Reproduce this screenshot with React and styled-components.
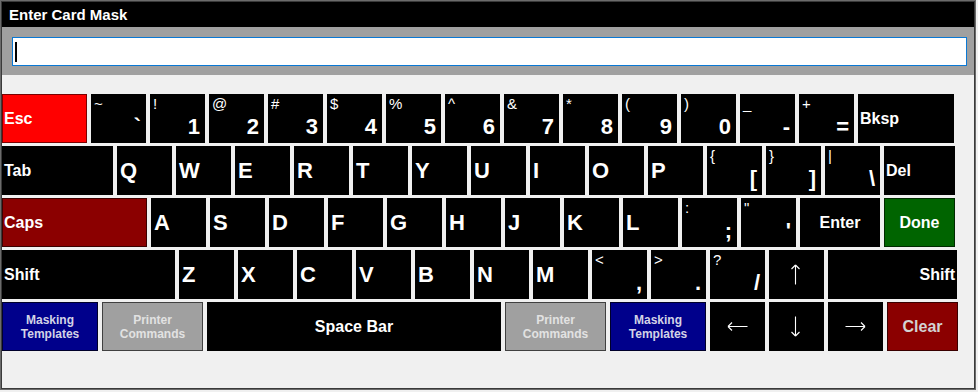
import React from "react";
import styled, { createGlobalStyle } from "styled-components";

const Global = createGlobalStyle`
  html, body { margin: 0; padding: 0; background: #f0f0f0; }
  body { font-family: "Liberation Sans", Arial, sans-serif; }
  * { box-sizing: border-box; }
`;

const Frame = styled.div`
  width: 976px;
  height: 390px;
  border: 1px solid #6b6b6b;
  padding: 1px;
  background: #3a3a3a;
  display: flex;
  flex-direction: column;
`;

const TitleBar = styled.div`
  height: 25px;
  flex: none;
  background: #000;
  color: #fff;
  font-weight: bold;
  font-size: 15px;
  display: flex;
  align-items: center;
  padding-left: 7px;
`;

const InputBand = styled.div`
  height: 48px;
  flex: none;
  background: #a0a0a0;
  padding: 10px 7px 9px 10px;
`;

const TextField = styled.div`
  width: 955px;
  height: 29px;
  background: #fff;
  border: 1px solid #0a78d4;
  display: flex;
  align-items: center;
  padding-left: 2px;
`;

const Caret = styled.span`
  display: block;
  width: 2px;
  height: 20px;
  background: #000;
`;

const KeyboardArea = styled.div`
  flex: 1;
  background: #f0f0f0;
  padding-top: 19px;
  display: flex;
  flex-direction: column;
  gap: 3px;
`;

const Row = styled.div`
  display: flex;
  gap: 4px;
`;

const KeyBase = styled.div`
  width: ${(p) => p.$w}px;
  height: 49px;
  flex: none;
  background: ${(p) => p.$bg || "#000"};
  border: 1px solid ${(p) => p.$bd || p.$bg || "#000"};
  color: ${(p) => p.$fg || "#fff"};
`;

const LabelKey = styled(KeyBase)`
  display: flex;
  align-items: center;
  justify-content: ${(p) =>
    p.$align === "right" ? "flex-end" : p.$align === "center" ? "center" : "flex-start"};
  padding: 0 1px;
  font-weight: bold;
  font-size: 16px;
  text-align: center;
`;

const LetterKey = styled(KeyBase)`
  display: flex;
  align-items: center;
  padding-left: 2px;
  font-weight: bold;
  font-size: 22px;
`;

const DualKey = styled(KeyBase)`
  display: flex;
  flex-direction: column;
  justify-content: space-between;
  padding: 0 4px 2px 2px;
`;

const Shifted = styled.span`
  align-self: flex-start;
  font-size: 15px;
  font-weight: normal;
  line-height: normal;
`;

const Main = styled.span`
  align-self: flex-end;
  font-size: 22px;
  font-weight: bold;
  line-height: normal;
`;

const SmallLabelKey = styled(KeyBase)`
  display: flex;
  align-items: center;
  justify-content: center;
  text-align: center;
  font-weight: bold;
  font-size: 12px;
  line-height: 14px;
`;

const ArrowKey = styled(KeyBase)`
  display: flex;
  align-items: center;
  justify-content: center;
  padding-right: ${(p) => (p.$vertical ? 3 : 1)}px;
`;

const ArrowSvg = styled.svg`
  display: block;
  transform: rotate(${(p) => p.$rot}deg);
`;

function ArrowIcon({ dir }) {
  const rot = { left: 0, up: 90, right: 180, down: 270 }[dir];
  return (
    <ArrowSvg $rot={rot} width="21" height="21" viewBox="0 0 21 21" fill="none">
      <path
        d="M1 10.5H20.5M1 10.5L5 6.5M1 10.5L5 14.5"
        stroke="#fff"
        strokeWidth="1.1"
      />
    </ArrowSvg>
  );
}

const RED = { $bg: "#ff0000", $bd: "#7a0000" };
const DARKRED = { $bg: "#8b0000", $bd: "#3a0000" };
const GREEN = { $bg: "#006400", $bd: "#002a00" };
const NAVY = { $bg: "#00008b", $bd: "#00002a", $fg: "#d3d3e6" };
const GRAY = { $bg: "#a0a0a0", $bd: "#404040", $fg: "#e2e2e2" };

const L = (label, w, extra = {}) => ({ kind: "label", label, w, ...extra });
const C = (ch) => ({ kind: "letter", label: ch, w: 55 });
const D = (s, m) => ({ kind: "dual", s, m, w: 55 });
const A = (dir) => ({ kind: "arrow", dir, w: 55 });
const S = (label, w, extra) => ({ kind: "small", label, w, ...extra });

const rows = [
  [
    L("Esc", 85, RED),
    D("~", "`"), D("!", "1"), D("@", "2"), D("#", "3"), D("$", "4"), D("%", "5"),
    D("^", "6"), D("&", "7"), D("*", "8"), D("(", "9"), D(")", "0"), D("_", "-"),
    D("+", "="),
    L("Bksp", 96),
  ],
  [
    L("Tab", 111),
    ..."QWERTYUIOP".split("").map(C),
    D("{", "["), D("}", "]"), D("|", "\\"),
    L("Del", 71),
  ],
  [
    L("Caps", 145, DARKRED),
    ..."ASDFGHJKL".split("").map(C),
    D(":", ";"), D('"', "'"),
    L("Enter", 80, { $align: "center" }),
    L("Done", 71, { ...GREEN, $align: "center" }),
  ],
  [
    L("Shift", 173),
    ..."ZXCVBNM".split("").map(C),
    D("<", ","), D(">", "."), D("?", "/"),
    A("up"),
    L("Shift", 129, { $align: "right" }),
  ],
  [
    S(["Masking", "Templates"], 96, NAVY),
    S(["Printer", "Commands"], 101, GRAY),
    L("Space Bar", 294, { $align: "center" }),
    S(["Printer", "Commands"], 101, GRAY),
    S(["Masking", "Templates"], 96, NAVY),
    A("left"), A("down"), A("right"),
    L("Clear", 71, { ...DARKRED, $fg: "#d3d3d3", $align: "center" }),
  ],
];

function Key({ k }) {
  const { kind, label, w, s, m, dir, ...style } = k;
  if (kind === "letter") return <LetterKey $w={w}>{label}</LetterKey>;
  if (kind === "dual")
    return (
      <DualKey $w={w}>
        <Shifted>{s}</Shifted>
        <Main>{m}</Main>
      </DualKey>
    );
  if (kind === "arrow")
    return (
      <ArrowKey $w={w} $vertical={dir === "up" || dir === "down"} aria-label={dir}>
        <ArrowIcon dir={dir} />
      </ArrowKey>
    );
  if (kind === "small")
    return (
      <SmallLabelKey $w={w} {...style}>
        <span>
          {label[0]}
          <br />
          {label[1]}
        </span>
      </SmallLabelKey>
    );
  return (
    <LabelKey $w={w} {...style}>
      {label}
    </LabelKey>
  );
}

export default function App() {
  return (
    <>
      <Global />
      <Frame>
        <TitleBar>Enter Card Mask</TitleBar>
        <InputBand>
          <TextField>
            <Caret />
          </TextField>
        </InputBand>
        <KeyboardArea>
          {rows.map((r, i) => (
            <Row key={i}>
              {r.map((k, j) => (
                <Key key={j} k={k} />
              ))}
            </Row>
          ))}
        </KeyboardArea>
      </Frame>
    </>
  );
}
